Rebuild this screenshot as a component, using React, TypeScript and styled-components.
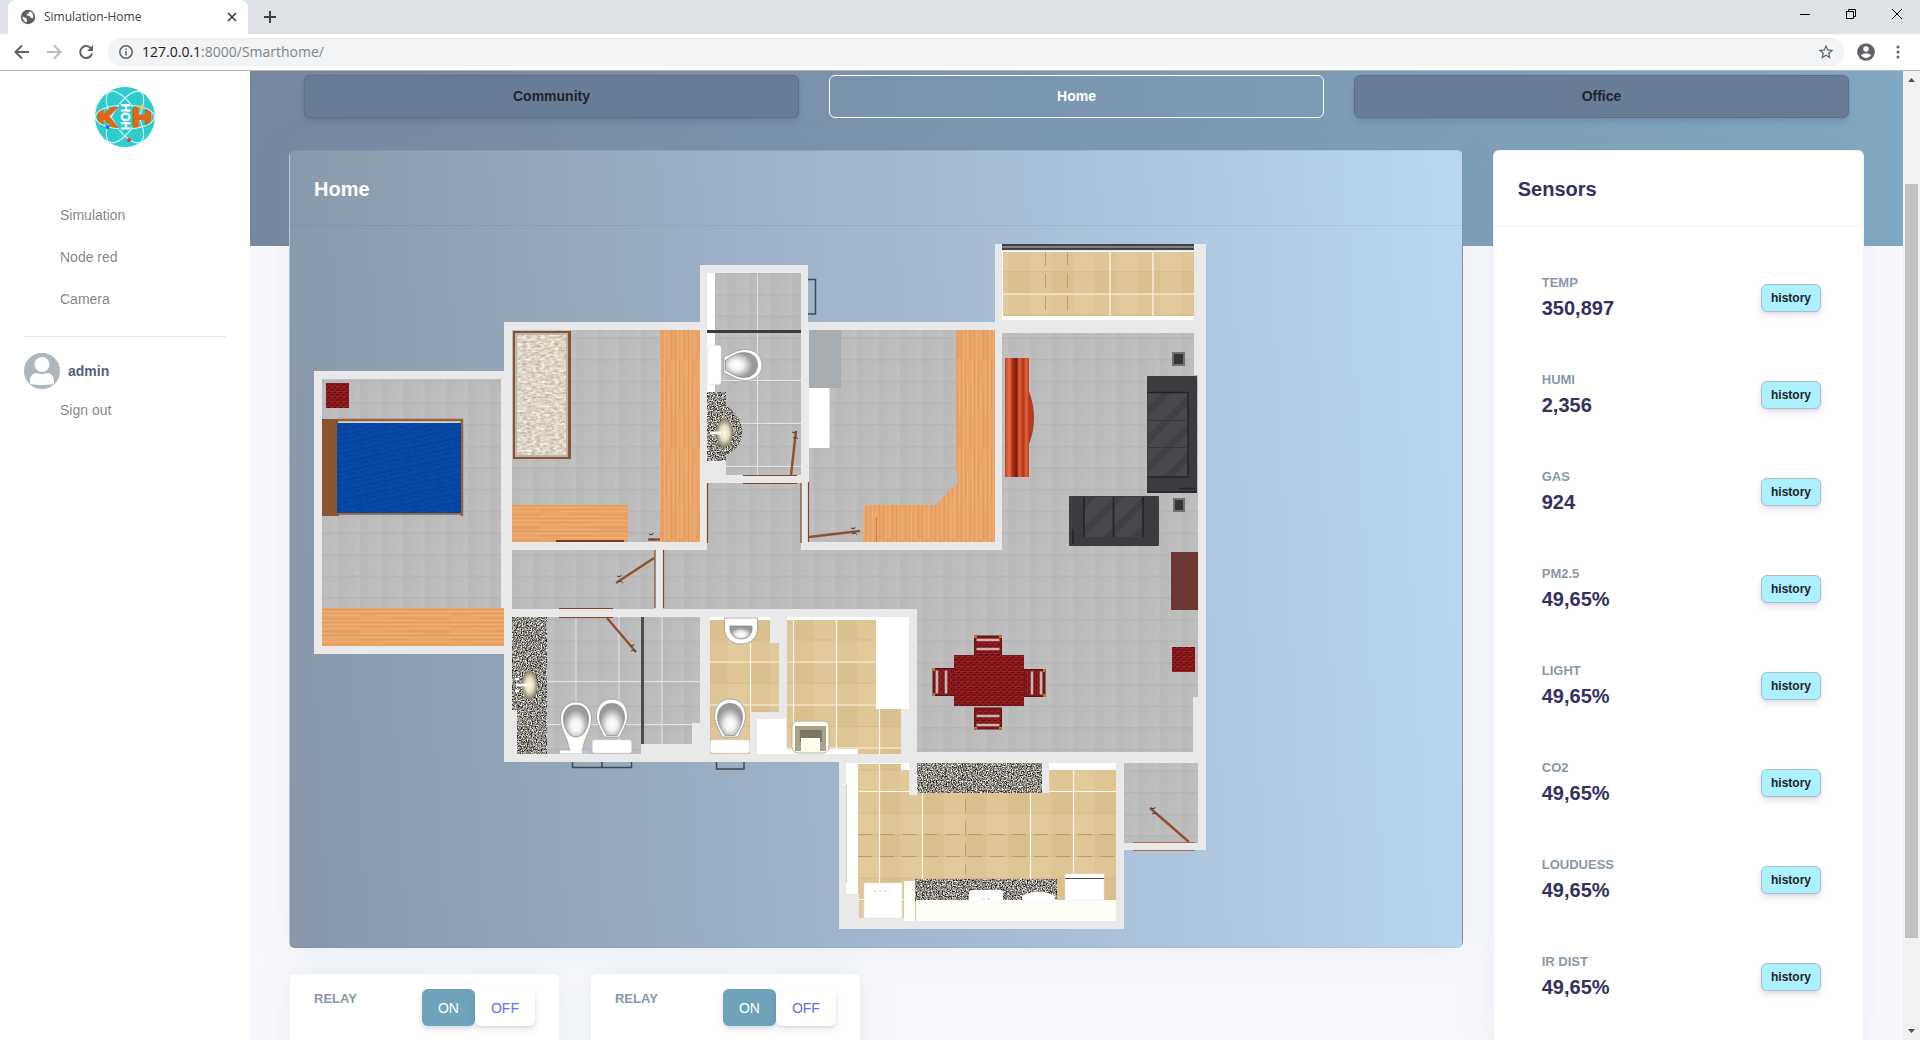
import React from 'react';
import styled, { createGlobalStyle, css } from 'styled-components';

const GlobalStyle = createGlobalStyle`
  *, *::before, *::after { box-sizing: border-box; }
  body { margin: 0; overflow: hidden; font-family: 'Liberation Sans', Arial, sans-serif; }
  button, input { font-family: inherit; }
`;

/* ---------- browser frame ---------- */

const Window = styled.div`
  display: flex;
  flex-direction: column;
  height: 100vh;
  background: #fff;
`;

const TabStrip = styled.header`
  display: flex;
  flex: none;
  height: 34px;
  padding-left: 8px;
  background: #dee1e6;
`;

const Tab = styled.div`
  display: flex;
  align-items: center;
  width: 240px;
  padding: 0 8px 0 12px;
  border-radius: 8px 8px 0 0;
  background: #fff;
  color: #3c4043;
  font: 12px/16px 'Open Sans', 'Noto Sans', sans-serif;
`;

const TabTitle = styled.span`
  flex: 1;
  margin-left: 8px;
`;

const IconButton = styled.button<{ $size?: number }>`
  display: inline-flex;
  align-items: center;
  justify-content: center;
  flex: none;
  width: ${(p) => p.$size ?? 32}px;
  height: ${(p) => p.$size ?? 32}px;
  padding: 0;
  border: 0;
  background: none;
  color: #5f6368;
`;

const NewTab = styled(IconButton)`
  width: 28px;
  margin: 0 auto 0 8px;
  align-self: center;
  color: #3c4043;
`;

const WindowButton = styled(IconButton)`
  width: 46px;
  height: 28px;
  color: #000;
`;

const Toolbar = styled.div`
  display: flex;
  flex: none;
  align-items: center;
  height: 37px;
  padding: 0 6px;
  border-bottom: 1px solid #b5b5b5;
`;

const Omnibox = styled.div`
  display: flex;
  flex: 1;
  align-items: center;
  height: 28px;
  margin: 0 6px;
  padding: 0 2px;
  border-radius: 14px;
  background: #f1f3f4;
`;

const Address = styled.div`
  flex: 1;
  color: #80868b;
  font: 14px/20px 'Open Sans', 'Noto Sans', sans-serif;
  b { font-weight: 400; color: #202124; }
`;

/* ---------- page ---------- */

const Viewport = styled.div`
  display: flex;
  flex: 1;
  min-height: 0;
`;

const Sidebar = styled.nav`
  flex: none;
  width: 250px;
  padding: 16px 24px;
  background: #fff;
`;

const Brand = styled.a`
  display: block;
  width: 60px;
  height: 60px;
  margin: 0 auto 47px;
`;

const NavLink = styled.a`
  display: block;
  padding: 11px 36px;
  color: rgba(0, 0, 0, 0.5);
  font-size: 14px;
  line-height: 20px;
  text-decoration: none;
`;

const Divider = styled.hr`
  margin: 16px 0;
  border: 0;
  border-top: 1px solid rgba(0, 0, 0, 0.1);
`;

const User = styled.a`
  display: flex;
  align-items: center;
  gap: 8px;
  color: #525f7f;
  font-size: 14px;
  font-weight: 700;
  text-decoration: none;
`;

const Main = styled.main`
  flex: 1;
  min-width: 0;
  overflow: hidden;
  background: #f8f9fe;
`;

const Hero = styled.div`
  padding: 4px 39px 128px;
  background: linear-gradient(87deg, #76879e, #80a8c2);
`;

const Places = styled.div`
  display: grid;
  grid-template-columns: repeat(3, 1fr);
  gap: 30px;
  padding: 0 15px;
`;

const buttonShadow = css`
  box-shadow: 0 4px 6px rgba(50, 50, 93, 0.11), 0 1px 3px rgba(0, 0, 0, 0.08);
`;

const PlaceButton = styled.button<{ $active?: boolean }>`
  height: 43px;
  padding: 0 0 2px;
  border: 1px solid #5f7088;
  border-radius: 6px;
  background: #697c95;
  color: #212529;
  font-size: 14px;
  font-weight: 700;
  line-height: 20px;
  ${buttonShadow}
  ${(p) => p.$active && css`
    border-color: #fff;
    background: transparent;
    color: #fff;
    box-shadow: none;
  `}
`;

const Content = styled.div`
  display: flex;
  margin-top: -96px;
  padding: 0 24px;
`;

const Column = styled.div<{ $share: number }>`
  flex: 0 0 ${(p) => p.$share}%;
  min-width: 0;
  padding: 0 15px;
`;

const Card = styled.section<{ $tinted?: boolean }>`
  border: 1px solid rgba(0, 0, 0, 0.05);
  border-radius: 6px;
  background: ${(p) => (p.$tinted ? 'linear-gradient(87deg, #8898aa, #bad6f0)' : '#fff')};
  box-shadow: 0 0 32px rgba(136, 152, 170, 0.15);
`;

const CardTitle = styled.h2<{ $light?: boolean }>`
  margin: 0;
  padding: 25px 24px 23px;
  border-bottom: 1px solid rgba(0, 0, 0, 0.05);
  color: ${(p) => (p.$light ? '#fff' : '#32325d')};
  font-size: 20px;
  line-height: 26px;
`;

const PlanBody = styled.div`
  padding: 14px 24px;
  svg { display: block; width: 80%; }
`;

const SensorList = styled.ul`
  margin: 0;
  padding: 24px;
  list-style: none;
`;

const SensorRow = styled.li`
  display: flex;
  align-items: center;
  justify-content: space-between;
  padding: 23px 18px 24px 24px;
`;

const Label = styled.h5`
  margin: 0;
  color: #8898aa;
  font-size: 13px;
  line-height: 20px;
`;

const Value = styled.span`
  color: #32325d;
  font-size: 20px;
  font-weight: 700;
  line-height: 30px;
`;

const HistoryButton = styled.button`
  width: 60px;
  height: 28px;
  padding: 0;
  border: 1px solid #a9bfc8;
  border-radius: 6px;
  background: #adf0ff;
  color: #212529;
  font-size: 12px;
  font-weight: 700;
  line-height: 16px;
  ${buttonShadow}
`;

const Relays = styled.div`
  display: flex;
  margin: 25px -15px 0;
`;

const RelayCard = styled(Card)`
  display: flex;
  align-items: flex-start;
  justify-content: space-between;
  min-height: 120px;
  padding: 15px 24px;
`;

const Toggle = styled.div`
  display: flex;
`;

const ToggleButton = styled.button<{ $on?: boolean }>`
  height: 37px;
  padding: 0 16px;
  border: 0;
  border-radius: 6px;
  background: ${(p) => (p.$on ? '#6fa3bb' : '#fff')};
  color: ${(p) => (p.$on ? '#fff' : '#5e72e4')};
  font-size: 14px;
  line-height: 20px;
  ${buttonShadow}
`;

const Scrollbar = styled.div`
  display: flex;
  flex: none;
  flex-direction: column;
  align-items: center;
  width: 17px;
  background: #f1f1f1;
`;

const Track = styled.div`
  display: grid;
  flex: 1;
  grid-template-rows: 96fr 754fr 85fr;
  width: 13px;
  &::before { content: ''; grid-row: 2; background: #c1c1c1; }
`;

/* ---------- drawings ---------- */

function Logo() {
  return (
    <svg viewBox="0 0 60 60" width="60" height="60" role="img" aria-label="KHOH">
      <defs>
        <clipPath id="lens"><ellipse cx="30" cy="30" rx="28.5" ry="11.5" /></clipPath>
      </defs>
      <circle cx="30" cy="30" r="30" fill="#30cbcc" />
      <g fill="none" stroke="#d5f6f4" strokeWidth="1.1">
        <ellipse cx="30" cy="30" rx="29.5" ry="12" />
        <ellipse cx="30" cy="30" rx="29.5" ry="12" transform="rotate(58 30 30)" />
        <ellipse cx="30" cy="30" rx="29.5" ry="12" transform="rotate(122 30 30)" />
      </g>
      <g clipPath="url(#lens)" fill="#e2660f" stroke="#e2660f" strokeWidth="2" fontFamily="Liberation Sans, Arial, sans-serif" fontWeight="700" fontSize="28">
        <text x="2" y="40">K</text>
        <text x="37" y="40">H</text>
      </g>
      <rect x="24" y="17" width="12" height="26" fill="#30cbcc" />
      <text transform="translate(25.500 16.500) rotate(90)" fill="#fff" stroke="#fff" strokeWidth=".3" fontFamily="Liberation Sans, Arial, sans-serif" fontWeight="700" fontSize="12">HOH</text>
      <circle cx="47" cy="20" r="2" fill="#f5d90a" />
      <circle cx="12.500" cy="40" r="2" fill="#2b66ff" />
      <circle cx="34" cy="53" r="2" fill="#ff2d35" />
    </svg>
  );
}

function Avatar() {
  return (
    <svg viewBox="0 0 36 36" width="36" height="36" aria-hidden="true">
      <circle cx="18" cy="18" r="18" fill="#adb5bd" />
      <circle cx="18" cy="11.500" r="7.500" fill="#fff" />
      <path d="M6 31v-3c0-5 3-8 7-8 3 1.500 7 1.500 10 0 4 0 7 3 7 8v3q-12 2-24 0z" fill="#fff" />
    </svg>
  );
}

const Globe = () => (
  <svg width="16" height="16" viewBox="0 0 16 16" aria-hidden="true">
    <circle cx="8" cy="8" r="7.200" fill="#5a5f64" />
    <path d="M2.500 7.500l3.200 1.200 1.300 1.600-.5 3.200C4 12.800 2.500 10.500 2.500 7.500zM9.500 2.200l-1 2.300-2 .6.600 1.400 2.600.4 1 1.800 2.500.6c.8-3-.8-6.200-3.700-7.100z" fill="#fff" />
  </svg>
);

const Star = () => (
  <svg width="18" height="18" viewBox="0 0 24 24" fill="#5f6368" aria-hidden="true">
    <path d="M22 9.240l-7.190-.62L12 2 9.190 8.630 2 9.240l5.460 4.730L5.820 21 12 17.270 18.180 21l-1.630-7.030L22 9.240zM12 15.400l-3.760 2.270 1-4.280-3.320-2.880 4.380-.38L12 6.100l1.710 4.040 4.380.38-3.320 2.880 1 4.280L12 15.400z" />
  </svg>
);

const Arrow = ({ flip }: { flip?: boolean }) => (
  <svg width="16" height="16" viewBox="0 0 16 16" fill="none" stroke={flip ? '#babcbe' : '#5f6368'} strokeWidth="2" aria-hidden="true">
    <path d={flip ? 'M1 8h13M8 1.500L14.500 8 8 14.500' : 'M15 8H2M8 1.500L1.500 8 8 14.500'} />
  </svg>
);

const Reload = () => (
  <svg width="16" height="16" viewBox="0 0 16 16" aria-hidden="true">
    <path d="M13 4.500A6 6 0 1 0 14 9.500" fill="none" stroke="#5f6368" strokeWidth="2" />
    <path d="M15 1v6H9z" fill="#5f6368" />
  </svg>
);

type Box = [number, number, number, number];

const Rects = ({ boxes, ...rest }: { boxes: Box[] } & React.SVGProps<SVGGElement>) => (
  <g {...rest}>
    {boxes.map(([x1, y1, x2, y2], i) => (
      <rect key={i} x={x1} y={y1} width={x2 - x1} height={y2 - y1} />
    ))}
  </g>
);

const Handle = ({ x, y }: { x: number; y: number }) => (
  <path d={`M${x - 3} ${y - 3}l3 1 1-2M${x - 2} ${y + 3}l3-1 2 2`} stroke="#3b4147" fill="none" />
);

const Toilet = ({ x, y, turn = 0 }: { x: number; y: number; turn?: number }) => (
  <g transform={`translate(${x} ${y}) rotate(${turn})`}>
    <path d="M-9 28h18l-1 6h-16z" fill="#f4f4f4" stroke="#aaa" strokeWidth=".6" />
    <path d="M0 0c-10 0-15.500 8-15.500 17 0 8 5.500 15 7.500 21h16c2-6 7.500-13 7.500-21C15.500 8 10 0 0 0z" fill="#fff" stroke="#999" strokeWidth=".8" />
    <path d="M0 4.500c-8 0-12.500 6-12.500 14 0 7 5 14 7.500 18h10c2.500-4 7.500-11 7.500-18 0-8-4.500-14-12.500-14z" fill="url(#bowl)" stroke="#777" strokeWidth=".6" />
    <rect x="-19.500" y="41" width="39" height="13" rx="2" fill="#fff" stroke="#ddd" strokeWidth=".5" />
  </g>
);

const Chair = ({ x, y, turn }: { x: number; y: number; turn: number }) => (
  <g transform={`translate(${x} ${y}) rotate(${turn})`}>
    <rect x="-13.500" y="0" width="27" height="21" fill="url(#redCloth)" stroke="#5d1212" strokeWidth="1" />
    <path d="M-11.500 4h23M-11.500 13h23" stroke="#c9b4b4" strokeWidth="2.600" />
    <path d="M-14 1h3M11 1h3" stroke="#c07a2c" strokeWidth="2" />
  </g>
);

function FloorPlan() {
  return (
    <svg viewBox="314 241 899 693" role="img" aria-label="Home floor plan">
      <defs>
        <linearGradient id="stoneTile" x2="1" y2=".4">
          <stop offset="0" stopColor="#b8b8b8" /><stop offset="1" stopColor="#c0c0c0" />
        </linearGradient>
        <pattern id="stone" x="1051.6" y="338.2" width="21.62" height="21.66" patternUnits="userSpaceOnUse">
          <rect width="22" height="22" fill="url(#stoneTile)" />
          <rect width="22" height="1.500" fill="#b0b0b0" opacity=".6" />
          <path d="M4 18l2-5M13 19l3-5M15 8l2-4" stroke="#b2b2b2" strokeWidth=".8" opacity=".7" fill="none" />
        </pattern>
        <pattern id="sand" x="1051.6" y="338.2" width="43.24" height="43.32" patternUnits="userSpaceOnUse">
          <rect width="44" height="44" fill="#dfc696" />
          <rect width="21.62" height="44" fill="#dac08e" />
          <rect width="44" height="21.66" fill="#e4cda2" opacity=".4" />
          <path d="M0 21.200h44M0 43h44" stroke="#d2b680" strokeWidth=".8" />
        </pattern>
        <pattern id="woodV" width="13" height="90" patternUnits="userSpaceOnUse">
          <rect width="13" height="90" fill="#eaa468" />
          <path d="M1.500 0v90M5.500 20v70M10.500 0v60" stroke="#efae75" strokeWidth="1.200" />
          <path d="M3.500 0v50M8.500 30v60M12.500 0v90" stroke="#e19a5a" strokeWidth=".9" />
        </pattern>
        <pattern id="woodH" width="90" height="13" patternUnits="userSpaceOnUse">
          <rect width="90" height="13" fill="#eaa468" />
          <path d="M0 1.500h90M20 5.500h70M0 10.500h60" stroke="#efae75" strokeWidth="1.200" />
          <path d="M0 3.500h50M30 8.500h60M0 12.500h90" stroke="#e19a5a" strokeWidth=".9" />
        </pattern>
        <pattern id="redCloth" width="6" height="5" patternUnits="userSpaceOnUse">
          <rect width="6" height="5" fill="#8f1a1d" />
          <path d="M0 1h4M3 3.500h3" stroke="#5b0d10" />
          <path d="M1 2.500h3" stroke="#a82528" />
        </pattern>
        <pattern id="blueCloth" width="14" height="9" patternUnits="userSpaceOnUse" patternTransform="rotate(-12)">
          <rect width="14" height="9" fill="#0649a8" />
          <path d="M0 2l4 1 4-1 6 1M3 7l5-1 4 1" stroke="#04409a" strokeWidth="1.500" fill="none" />
        </pattern>
        <pattern id="sofa" width="20" height="20" patternUnits="userSpaceOnUse" patternTransform="rotate(-45)">
          <rect width="20" height="20" fill="#47474d" />
          <rect width="20" height="7" fill="#3f3f45" />
        </pattern>
        <linearGradient id="drape">
          <stop offset="0" stopColor="#c23f1e" /><stop offset=".18" stopColor="#e8714c" />
          <stop offset=".32" stopColor="#a92f13" /><stop offset=".48" stopColor="#7d1c09" />
          <stop offset=".6" stopColor="#e0623c" /><stop offset=".75" stopColor="#b33415" />
          <stop offset=".9" stopColor="#e0633e" /><stop offset="1" stopColor="#b53a1c" />
        </linearGradient>
        <radialGradient id="bowl" cy=".65">
          <stop offset="0" stopColor="#fff" /><stop offset=".4" stopColor="#f2f2f2" /><stop offset="1" stopColor="#9a9a9a" />
        </radialGradient>
        <radialGradient id="basin">
          <stop offset="0" stopColor="#fffbe8" /><stop offset=".5" stopColor="#e8dfc2" /><stop offset="1" stopColor="#857f68" />
        </radialGradient>
        <filter id="granite" x="0" y="0" width="1" height="1" colorInterpolationFilters="sRGB">
          <feTurbulence type="fractalNoise" baseFrequency=".8" numOctaves="2" seed="4" />
          <feColorMatrix values="1.900 0 0 0 -.4  1.900 0 0 0 -.41  1.900 0 0 0 -.44  0 0 0 0 1" />
          <feComposite in2="SourceGraphic" operator="in" />
        </filter>
        <filter id="fleece" x="0" y="0" width="1" height="1" colorInterpolationFilters="sRGB">
          <feTurbulence type="fractalNoise" baseFrequency=".22 .45" numOctaves="3" seed="8" />
          <feColorMatrix values=".4 0 0 0 .67  .42 0 0 0 .62  .5 0 0 0 .52  0 0 0 0 1" />
          <feComposite in2="SourceGraphic" operator="in" />
        </filter>
      </defs>

      <path fill="#e9e9e9" d="M314 372h190v-49h196v-57h108v57h187v-78h211v606h-82v79H839V763H504V655H314z" />

      <Rects fill="url(#stone)" boxes={[
        [322, 380, 501, 610], [512, 331, 700, 543], [512, 551, 655, 610], [663, 551, 1198, 610],
        [707, 484, 801, 552], [1002, 334, 1194, 400], [1002, 376, 1198, 610], [917, 609, 1193, 753],
        [1192, 609, 1198, 698], [1124, 764, 1198, 844], [707, 274, 801, 476], [809, 331, 995, 543],
        [512, 618, 700, 755],
      ]} />
      <Rects fill="#fff" boxes={[[1002, 252, 1194, 321], [710, 618, 779, 755], [787, 618, 909, 755], [846, 764, 1116, 922]]} />
      <Rects fill="url(#sand)" boxes={[[1003, 253, 1194, 317], [710, 621, 779, 755], [787, 621, 901, 750], [858, 750, 901, 755], [858, 765, 1116, 922]]} />

      {/* tile joints */}
      <path stroke="#fff8ea" strokeWidth="1.200" fill="none" d="M1003 295h191M1110 253v64M1153 253v64M710 663h69M710 706h69M750.500 644v69M787 663h90M787 706h90M787 749h114M793.500 621v129M836.500 621v129M879.500 706v49M858 792.500h51M1049 792.500h67M879.500 765v120M922.500 794v86M1030.500 794v86M1073.500 771v104M858 900.500h48" />
      <path stroke="#b59560" strokeWidth=".8" fill="none" d="M858 835.500h258M858 857.500h258M965.500 800v75M1045.500 253v62M1067.500 253v62" strokeDasharray="14 8" />
      <path stroke="#e3e3e3" fill="none" d="M757.500 274v202M707 381.500h94M707 424.500h94M707 467.500h94M576 618v137M619 618v137M662 618v127M546 682.500h154M546 725.500h154" />

      {/* wood furniture */}
      <Rects fill="url(#woodV)" boxes={[[660, 331, 700, 543]]} />
      <Rects fill="url(#woodH)" boxes={[[322, 609, 504, 647], [512, 506, 628, 543]]} />
      <path fill="url(#woodV)" d="M956 331h39v212H863v-34l4-3h68l23-22-2-14z" />
      <path stroke="#b9824e" d="M876.500 518v25" />

      {/* left bedroom */}
      <rect x="326" y="384" width="23" height="25" fill="url(#redCloth)" />
      <rect x="322" y="420" width="17" height="97" fill="#8a5530" />
      <path d="M338 421h125M338 514.500h125M462 420v97" stroke="#9a6238" strokeWidth="2.500" />
      <path d="M338 423.500h122" stroke="#d6d2cc" strokeWidth="2" />
      <rect x="337" y="424" width="124" height="90" fill="url(#blueCloth)" />

      {/* second bedroom */}
      <rect x="513" y="332" width="58" height="128" fill="#8b5431" />
      <rect x="515" y="334" width="53" height="124" fill="#b9b6b2" />
      <rect x="517" y="336" width="49" height="120" filter="url(#fleece)" />
      <path d="M556 542h68" stroke="#7b3b1c" strokeWidth="2" />
      <path d="M648 540.500h12" stroke="#93502a" strokeWidth="2.500" />
      <Handle x={652} y={538} />

      {/* upper bathroom */}
      <Rects fill="#fff" boxes={[[707, 274, 715, 393]]} />
      <rect x="707" y="331" width="94" height="3" fill="#3c3c3e" />
      <Toilet x={762} y={366} turn={90} />
      <path d="M707 393h19v14c8 4 16 14 16 26s-8 20-16 23v6h-19z" filter="url(#granite)" />
      <ellipse cx="724.500" cy="434" rx="8.500" ry="14" fill="url(#basin)" />
      <path d="M710 434h11" stroke="#fff" strokeWidth="3" />
      <rect x="707" y="462" width="19" height="16" fill="#e9e9e9" />
      <path d="M743 476.500h54M743 484.500h54M707.500 484v60M801 484v60M808.500 483v60M655 551v58M663.500 551v58M559 609.500h54M559 618.500h54" stroke="#7d492a" strokeWidth="1.200" />
      <path d="M808 280.500h7.500v34.500H808" stroke="#44494f" strokeWidth="1.500" fill="none" />

      {/* study */}
      <rect x="809" y="331" width="32" height="58" fill="#a7adb1" />
      <rect x="809" y="389" width="20.500" height="60" fill="#fff" />

      {/* doors */}
      <path d="M791 476l5-44M809 538l51-6M654 559l-38 25M607 619l29 34M1150 809l39 34" stroke="#94502a" strokeWidth="2.400" />
      <Handle x={795} y={436} /><Handle x={854} y={532} /><Handle x={620} y={580} /><Handle x={633} y={649} /><Handle x={1154} y={812} />
      <path d="M1133 843.500h62M1133 851.500h62" stroke="#b0674a" strokeWidth="1.200" />

      {/* balcony and living room */}
      <rect x="1002" y="245" width="192" height="6" fill="#7d8180" />
      <path d="M1002 246h192M1002 250h192" stroke="#2d3030" strokeWidth="1.300" />
      <rect x="1005" y="359" width="24" height="119" fill="url(#drape)" />
      <path d="M1029 392q10 28 0 53z" fill="#b13a1d" />
      <Rects fill="#353535" stroke="#6f6f6f" strokeWidth="2" boxes={[[1173, 354, 1184, 366], [1174, 500, 1184, 512]]} />
      <rect x="1147" y="377" width="50" height="117" rx="1" fill="#3c3c40" />
      <rect x="1148" y="394" width="40" height="84" fill="url(#sofa)" />
      <path d="M1147 393.500h41M1147 478h41M1188 393v85M1179 489.500h16M1147 493h50" stroke="#242427" strokeWidth="1.400" fill="none" />
      <path d="M1148 421.500h40M1148 448.500h40" stroke="#36363b" />
      <rect x="1069" y="497" width="90" height="50" rx="1" fill="#3c3c40" />
      <rect x="1084" y="498" width="58" height="40" fill="url(#sofa)" />
      <path d="M1084 498v40M1143 498v40M1113.500 498v40M1073 530v15" stroke="#242427" strokeWidth="1.600" />
      <rect x="1171" y="553" width="27" height="58" fill="#6b3833" />
      <rect x="1172" y="648" width="23" height="25" fill="url(#redCloth)" />
      <Chair x={988} y={637} turn={0} />
      <Chair x={988} y={730} turn={180} />
      <Chair x={933} y={683} turn={-90} />
      <Chair x={1045} y={684} turn={90} />
      <rect x="954" y="656" width="70" height="51" fill="url(#redCloth)" />

      {/* lower bathroom */}
      <rect x="512" y="618" width="35" height="137" filter="url(#granite)" />
      <rect x="512" y="711" width="5" height="45" fill="#e9e9e9" />
      <ellipse cx="529.500" cy="686" rx="8" ry="14" fill="url(#basin)" />
      <path d="M516 686h11M515 680h4M515 692h4" stroke="#fff" strokeWidth="2.500" />
      <rect x="641" y="618" width="3" height="127" fill="#4c4c4e" />
      <Rects fill="#e9e9e9" boxes={[[641, 745, 700, 756], [692, 724, 701, 746]]} />
      <path d="M576 703c-10 0-15.500 8-15.500 16 0 12 7 20 8 28q1 7 7.500 7t7.500-7c1-8 8-16 8-28 0-8-5.500-16-15.500-16z" fill="#fff" stroke="#999" strokeWidth=".8" />
      <path d="M576 706c-8 0-12.500 6-12.500 14 0 9 5 18 12.500 18s12.500-9 12.500-18c0-8-4.500-14-12.500-14z" fill="url(#bowl)" stroke="#777" strokeWidth=".6" />
      <path d="M560 753h24" stroke="#fff" strokeWidth="3" />
      <rect x="582" y="751" width="7" height="4" fill="#b9c4e0" />
      <Toilet x={612} y={700} />

      {/* toilet and laundry */}
      <Rects fill="#e9e9e9" boxes={[[770, 618, 780, 644], [750, 713, 787, 720], [750, 713, 757, 755], [901, 710, 910, 755]]} />
      <Rects fill="#fff" boxes={[[757, 720, 786, 755], [786, 750, 858, 755], [876, 618, 909, 710]]} />
      <path d="M724.500 619h33v10c0 10-7 16-16.500 16s-16.500-6-16.500-16z" fill="#fff" stroke="#999" strokeWidth=".8" />
      <path d="M730 627h22c1 8-4 13-11 13s-12-5-11-13z" fill="url(#bowl)" stroke="#777" strokeWidth=".6" />
      <Toilet x={730} y={700} />
      <rect x="792" y="722" width="37" height="32" rx="6" fill="#fffdf0" stroke="#b9b39c" />
      <rect x="795" y="727" width="31" height="25" fill="#a9a28b" />
      <rect x="800" y="731" width="22" height="12" fill="#7d7664" />
      <rect x="801" y="739" width="19" height="13" fill="#fffdf0" />

      {/* kitchen */}
      <Rects fill="#e9e9e9" boxes={[[909, 763, 917, 796], [1042, 763, 1049, 794], [839, 895, 859, 922], [859, 919, 907, 923]]} />
      <Rects fill="#fff" boxes={[[901, 765, 909, 771], [1049, 764, 1116, 771], [846, 765, 858, 885]]} />
      <path d="M846.500 786v98" stroke="#cfcfcf" />
      <rect x="917" y="764" width="125" height="30" filter="url(#granite)" />
      <rect x="915" y="880" width="142" height="22" filter="url(#granite)" />
      <Rects fill="#fefef6" boxes={[[846, 884, 858, 895], [904, 882, 915, 922], [916, 901, 1116, 922]]} />
      <Rects fill="#fff" stroke="#e4e4e4" strokeWidth=".6" boxes={[[864, 884, 902, 919], [1065, 875, 1104, 901]]} />
      <path d="M1065 879.500h39" stroke="#4a4a4a" />
      <path d="M969 901v-7q0-3 4-3h26q4 0 4 3v7zM1022 901v-4q16-9 33 0v4z" fill="#fff" />
      <path d="M874 892h16M982 900h10" stroke="#ccc" strokeDasharray="3 2" />

      {/* outer windows */}
      <path d="M572.500 763v5.500h59V763M602 763v5M716.500 763v7h27.500v-7" stroke="#43484d" strokeWidth="1.500" fill="none" />
    </svg>
  );
}

/* ---------- app ---------- */

const sensors = [
  ['TEMP', '350,897'],
  ['HUMI', '2,356'],
  ['GAS', '924'],
  ['PM2.5', '49,65%'],
  ['LIGHT', '49,65%'],
  ['CO2', '49,65%'],
  ['LOUDUESS', '49,65%'],
  ['IR DIST', '49,65%'],
];

const Relay = () => (
  <Column $share={25}>
    <RelayCard>
      <Label>RELAY</Label>
      <Toggle>
        <ToggleButton $on type="button">ON</ToggleButton>
        <ToggleButton type="button">OFF</ToggleButton>
      </Toggle>
    </RelayCard>
  </Column>
);

export default function App() {
  return (
    <Window>
      <GlobalStyle />
      <TabStrip>
        <Tab>
          <Globe />
          <TabTitle>Simulation-Home</TabTitle>
          <IconButton $size={16} type="button" aria-label="Close tab">
            <svg width="10" height="10" viewBox="0 0 10 10" stroke="#3c4043" strokeWidth="1.700"><path d="M1 1l8 8M9 1L1 9" /></svg>
          </IconButton>
        </Tab>
        <NewTab type="button" aria-label="New tab">
          <svg width="12" height="12" viewBox="0 0 12 12" stroke="currentColor" strokeWidth="2"><path d="M6 0v12M0 6h12" /></svg>
        </NewTab>
        <WindowButton type="button" aria-label="Minimize">
          <svg width="10" height="10" viewBox="0 0 10 10" stroke="currentColor"><path d="M0 5.500h10" /></svg>
        </WindowButton>
        <WindowButton type="button" aria-label="Restore">
          <svg width="10" height="10" viewBox="0 0 10 10" stroke="currentColor" fill="none"><path d="M.5 2.500h7v7h-7zM2.500 2.500v-2h7v7h-2" /></svg>
        </WindowButton>
        <WindowButton type="button" aria-label="Close">
          <svg width="10" height="10" viewBox="0 0 10 10" stroke="currentColor"><path d="M0 0l10 10M10 0L0 10" /></svg>
        </WindowButton>
      </TabStrip>
      <Toolbar>
        <IconButton type="button" aria-label="Back"><Arrow /></IconButton>
        <IconButton type="button" aria-label="Forward"><Arrow flip /></IconButton>
        <IconButton type="button" aria-label="Reload"><Reload /></IconButton>
        <Omnibox>
          <IconButton type="button" aria-label="Site information">
            <svg width="14" height="14" viewBox="0 0 14 14" fill="none" stroke="#5f6368" strokeWidth="1.500"><circle cx="7" cy="7" r="6.200" /><path d="M7 6v4.500M7 3.500v1.500" /></svg>
          </IconButton>
          <Address><b>127.0.0.1</b>:8000/Smarthome/</Address>
          <IconButton type="button" aria-label="Bookmark"><Star /></IconButton>
        </Omnibox>
        <IconButton type="button" aria-label="Profile">
          <svg width="18" height="18" viewBox="0 0 18 18"><circle cx="9" cy="9" r="8.800" fill="#5f6368" /><circle cx="9" cy="6" r="2.700" fill="#fff" /><path d="M3.800 12.300Q9 8 14.200 12.300Q9 18 3.800 12.300z" fill="#fff" /></svg>
        </IconButton>
        <IconButton type="button" aria-label="Menu">
          <svg width="4" height="14" viewBox="0 0 4 14" fill="#5f6368"><circle cx="2" cy="2" r="1.500" /><circle cx="2" cy="7" r="1.500" /><circle cx="2" cy="12" r="1.500" /></svg>
        </IconButton>
      </Toolbar>
      <Viewport>
        <Sidebar>
          <Brand href="#"><Logo /></Brand>
          <NavLink href="#">Simulation</NavLink>
          <NavLink href="#">Node red</NavLink>
          <NavLink href="#">Camera</NavLink>
          <Divider />
          <User href="#"><Avatar />admin</User>
          <NavLink href="#">Sign out</NavLink>
        </Sidebar>
        <Main>
          <Hero>
            <Places>
              <PlaceButton type="button">Community</PlaceButton>
              <PlaceButton type="button" $active>Home</PlaceButton>
              <PlaceButton type="button">Office</PlaceButton>
            </Places>
          </Hero>
          <Content>
            <Column $share={75}>
              <Card $tinted>
                <CardTitle $light>Home</CardTitle>
                <PlanBody><FloorPlan /></PlanBody>
              </Card>
              <Relays>
                <Relay />
                <Relay />
              </Relays>
            </Column>
            <Column $share={25}>
              <Card>
                <CardTitle>Sensors</CardTitle>
                <SensorList>
                  {sensors.map(([name, value]) => (
                    <SensorRow key={name}>
                      <div>
                        <Label>{name}</Label>
                        <Value>{value}</Value>
                      </div>
                      <HistoryButton type="button">history</HistoryButton>
                    </SensorRow>
                  ))}
                </SensorList>
              </Card>
            </Column>
          </Content>
        </Main>
        <Scrollbar aria-hidden="true">
          <svg width="17" height="17" viewBox="0 0 17 17"><path d="M5 11l3.500-4 3.500 4z" fill="#505050" /></svg>
          <Track />
          <svg width="17" height="17" viewBox="0 0 17 17"><path d="M5 6l3.500 4L12 6z" fill="#505050" /></svg>
        </Scrollbar>
      </Viewport>
    </Window>
  );
}
